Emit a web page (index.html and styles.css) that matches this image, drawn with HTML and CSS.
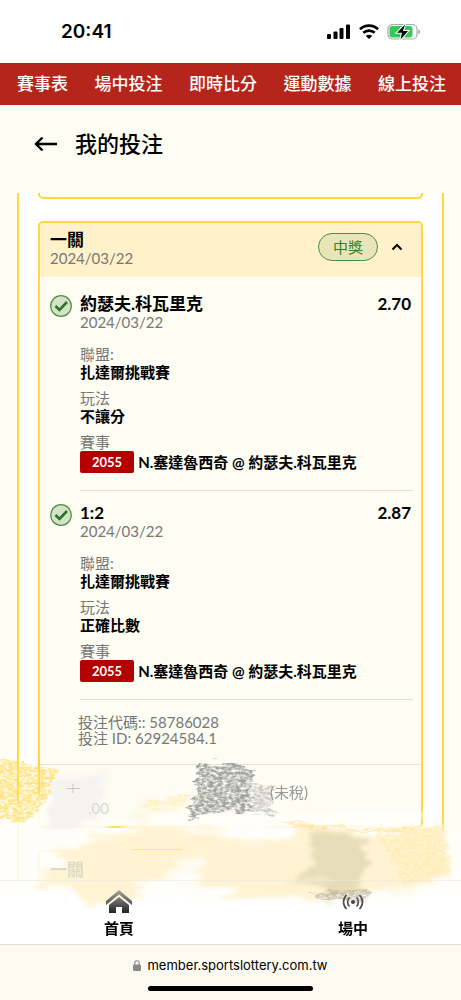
FILE: index.html
```html
<!DOCTYPE html>
<html lang="zh-Hant">
<head>
<meta charset="utf-8">
<meta name="viewport" content="width=device-width, initial-scale=1">
<title>我的投注</title>
<link rel="stylesheet" href="styles.css">
</head>
<body>
<div class="page">
  <header class="status">
    <span class="time">20:41</span>
    <div class="status-icons">
      <svg width="25" height="16" viewBox="0 0 25 16"><rect x="1" y="10" width="4" height="5" rx="1"/><rect x="7.500" y="7.500" width="4" height="7.500" rx="1"/><rect x="13.500" y="4" width="4" height="11" rx="1"/><rect x="20" y="0.500" width="4" height="14.500" rx="1"/></svg>
      <svg width="20" height="16" viewBox="0 0 20 16"><g fill="none" stroke="#000" stroke-width="2.700"><path d="M1 5.200C6 .4 14 .4 19 5.200"/><path d="M4.300 8.800c3.300-3 8.100-3 11.400 0"/></g><path d="M10 15 6.800 11.900c1.900-1.600 4.500-1.600 6.400 0z"/></svg>
      <svg width="34" height="18" viewBox="0 0 34 18"><rect x="1" y="1.500" width="29" height="14.500" rx="4.500" fill="#fff" stroke="#aaa" stroke-width="1.200"/><path d="M31.500 6.500c2 .7 2 4 0 4.700z" fill="#999"/><rect x="2.500" y="3" width="23" height="11.500" rx="3" fill="#34c759"/><path d="M18 1.500 10 9.700h5L13.500 16.500l7.500-8.500h-5z" stroke="#fff" stroke-width="2" paint-order="stroke"/></svg>
    </div>
  </header>
  <nav class="topnav">
    <a href="#">賽事表</a><a href="#">場中投注</a><a href="#">即時比分</a><a href="#">運動數據</a><a href="#">線上投注</a>
  </nav>
  <div class="heading">
    <button class="back" aria-label="返回"><svg width="24" height="18" viewBox="0 0 24 18"><path d="M23 9H2M8.500 2.500 2 9l6.500 6.500" fill="none" stroke="#000" stroke-width="2.400"/></svg></button>
    <h1>我的投注</h1>
  </div>

  <main class="list">
    <div class="card-end"></div>
    <section class="card">
      <div class="card-head">
        <div class="card-title"><h2>一關</h2><p class="date">2024/03/22</p></div>
        <span class="pill">中獎</span>
        <button class="toggle" aria-label="收合"><svg width="12" height="8" viewBox="0 0 12 8"><path d="m1.500 6.500 4.500-4.500 4.500 4.500" fill="none" stroke="#000" stroke-width="2"/></svg></button>
      </div>
      <article class="bet">
        <svg class="check" width="22" height="22" viewBox="0 0 22 22"><circle cx="11" cy="11" r="10.300" fill="#d5e2ca" stroke="#4f8d41" stroke-width="1.200"/><path d="m5.500 11 4 4 7.500-8" fill="none" stroke="#2c751f" stroke-width="2.600"/></svg>
        <div class="bet-body">
          <div class="bet-top"><h3>約瑟夫.科瓦里克</h3><strong>2.70</strong></div>
          <p class="date">2024/03/22</p>
          <dl>
            <div><dt>聯盟:</dt><dd>扎達爾挑戰賽</dd></div>
            <div><dt>玩法</dt><dd>不讓分</dd></div>
            <div><dt>賽事</dt><dd class="match"><span class="tag">2055</span>N.塞達魯西奇 @ 約瑟夫.科瓦里克</dd></div>
          </dl>
        </div>
      </article>
      <article class="bet">
        <svg class="check" width="22" height="22" viewBox="0 0 22 22"><circle cx="11" cy="11" r="10.300" fill="#d5e2ca" stroke="#4f8d41" stroke-width="1.200"/><path d="m5.500 11 4 4 7.500-8" fill="none" stroke="#2c751f" stroke-width="2.600"/></svg>
        <div class="bet-body">
          <div class="bet-top"><h3>1:2</h3><strong>2.87</strong></div>
          <p class="date">2024/03/22</p>
          <dl>
            <div><dt>聯盟:</dt><dd>扎達爾挑戰賽</dd></div>
            <div><dt>玩法</dt><dd>正確比數</dd></div>
            <div><dt>賽事</dt><dd class="match"><span class="tag">2055</span>N.塞達魯西奇 @ 約瑟夫.科瓦里克</dd></div>
          </dl>
        </div>
      </article>
      <div class="codes"><p>投注代碼:: 58786028</p><p>投注 ID: 62924584.1</p></div>
      <div class="totals"><span class="amount">.00</span><span class="pretax">(未稅)</span></div>
    </section>
    <section class="card next"><h2>一關</h2></section>
  </main>

  <nav class="tabs">
    <a href="#"><svg width="28" height="26" viewBox="0 0 28 26"><defs><linearGradient id="roof" x1="0" y1="0" x2="0" y2="1"><stop offset="0" stop-color="#aaa690"/><stop offset=".5" stop-color="#666"/><stop offset="1" stop-color="#222"/></linearGradient></defs><path fill="url(#roof)" d="M14 1 27 12v4L14 5.500 1 16v-4zM14 8l10 8v8h-7v-6h-6v6H4v-8z"/></svg><span>首頁</span></a>
    <a href="#"><svg width="24" height="26" viewBox="0 0 24 26"><circle cx="12" cy="13" r="2" fill="#444"/><path d="M8.500 8.500c-2.500 2.500-2.500 6.500 0 9M15.500 8.500c2.500 2.500 2.500 6.500 0 9M5.500 6c-4 4-4 10 0 14M18.500 6c4 4 4 10 0 14" fill="none" stroke="#4a4a46" stroke-width="1.600"/></svg><span>場中</span></a>
  </nav>
  <footer class="browser">
    <p><svg width="8" height="11" viewBox="0 0 8 11"><rect y="4.500" width="8" height="6.500" rx="1.200" fill="#888"/><path d="M1.800 5V3a2.200 2.200 0 0 1 4.400 0v2" fill="none" stroke="#888" stroke-width="1.100"/></svg>member.sportslottery.com.tw</p>
    <div class="indicator"></div>
  </footer>

  <svg class="scribble" viewBox="0 745 461 180" aria-hidden="true">
    <defs>
      <filter id="wash" x="-10%" y="-20%" width="120%" height="140%" color-interpolation-filters="sRGB">
        <feTurbulence type="fractalNoise" baseFrequency=".02 .16" numOctaves="3" seed="4" result="n"/>
        <feDisplacementMap in="SourceGraphic" in2="n" scale="26" xChannelSelector="R" yChannelSelector="G" result="d"/>
        <feGaussianBlur in="d" stdDeviation="2"/>
      </filter>
      <filter id="chalk" x="-10%" y="-20%" width="120%" height="140%" color-interpolation-filters="sRGB">
        <feTurbulence type="fractalNoise" baseFrequency=".04 .2" numOctaves="2" seed="8" result="n"/>
        <feDisplacementMap in="SourceGraphic" in2="n" scale="14" xChannelSelector="R" yChannelSelector="G" result="d"/>
        <feTurbulence type="fractalNoise" baseFrequency=".22 .4" numOctaves="3" seed="3"/>
        <feColorMatrix values="0 0 0 0 0  0 0 0 0 0  0 0 0 0 0  2.500 0 0 0 -.600" result="g"/>
        <feComposite in="d" in2="g" operator="in"/>
        <feGaussianBlur stdDeviation=".6"/>
      </filter>
    </defs>
    <g filter="url(#wash)">
      <path d="M-20 818 30 800 45 786 50 774 105 778 107 830 190 806 200 812 275 815 330 810 418 815 419 830 480 834 480 884 400 900 0 890-20 884z" fill="#fffefa" opacity=".9"/>
      <path d="M52 775h52l-2 46-54 8z" fill="#efefec" opacity=".7"/>
      <path d="M55 848 125 828 190 832 235 832 280 838 300 829 400 832 442 824 450 876 405 892 355 897 235 899 200 884 150 880 135 896 90 906 75 890 35 882 65 866z" fill="#fff2cd" opacity=".85"/>
      <path d="M137 806 192 796 180 812 137 820z" fill="#fff8df" opacity=".8"/>
      <path d="M160 874 202 856 198 888 145 894z" fill="#fff" opacity=".75"/>
      <path d="M195 822 278 816 268 840 235 844z" fill="#fffefb" opacity=".9"/>
    </g>
    <g filter="url(#wash)"><path d="M308 836 352 836 368 842 366 860 360 892 320 900 325 886 288 880 316 866z" fill="#ded4ae" opacity=".75"/></g>
    <g filter="url(#chalk)">
      <path d="M-15 756 58 767 48 797 26 822-15 817z" fill="#ffdf70" opacity=".85"/>
      <path d="M135 804 194 794 190 803 138 811z" fill="#ffe9a5" opacity=".5"/>
      <path d="M276 817 330 827 420 827 400 832 300 829z" fill="#ffdf85" opacity=".65"/>
      <path d="M375 832 445 824 452 875 405 886 385 850z" fill="#ffe7a0" opacity=".5"/>
      <path d="M198 762 225 763 257 772 249 785 250 812 245 814 222 810 188 819 191 806 197 796 196 780z" fill="#858582" opacity=".75"/>
      <path d="M248 784 276 785 270 806 277 817 248 813z" fill="#858582" opacity=".4"/>
      <path d="M310 892 370 890 366 902 320 901z" fill="#aaa58d" opacity=".6"/>
    </g>
    <path d="M0 880.500h461" stroke="#e9e9e4" opacity=".6"/>
    <path d="M132 849.500h50" stroke="#ffdf72" opacity=".8"/>
    <path d="M73 784v9M67 788.500h13" stroke="#aaa9a2" opacity=".6"/>
  </svg>
</div>
</body>
</html>
```
FILE: styles.css
```css
* { box-sizing: border-box; }
body, h1, h2, h3, p, dl, dd { margin: 0; }
body {
  background: #fdfdf4;
  color: #000;
  font: 15px/18px Lato, "Noto Sans CJK TC", sans-serif;
}
a { color: inherit; text-decoration: none; }
button { border: 0; padding: 0; background: none; display: flex; }
svg { display: block; flex: none; }

.page { position: relative; display: flex; flex-direction: column; height: 100vh; overflow: hidden; }

.status {
  display: flex; justify-content: space-between; align-items: center;
  height: 63px; padding: 0 40px 0 61px; background: #fff; flex: none;
}
.time { font: 600 19px/24px Inter, sans-serif; }
.status-icons { display: flex; align-items: center; gap: 8px; }

.topnav {
  display: flex; justify-content: space-between; align-items: center; flex: none;
  height: 42px; padding: 0 15px 0 17px; background: #b5251b; color: #fff;
  font-size: 17px; font-weight: 500; white-space: nowrap;
}

.heading { display: flex; align-items: center; gap: 17px; height: 88px; padding: 0 34px 10px; flex: none; }
.heading h1 { font-size: 22px; line-height: 28px; font-weight: 500; }

.list {
  flex: 1; min-height: 0; overflow: hidden; margin: 0 17px; padding: 0 19px;
  border: solid #ffd83b; border-width: 0 2px; background: #fff;
}
.card-end { height: 6px; border: 2px solid #ffd83b; border-top: 0; border-radius: 0 0 5px 5px; margin-bottom: 22px; background: #fdfdf4; }
.card { border: 2px solid #ffd83b; border-radius: 5px; background: #fdfdf4; margin-bottom: 22px; overflow: hidden; }
.card-head { display: flex; align-items: center; padding: 8px 18px 10px 10px; background: #fff1c9; }
.card-title { flex: 1; }
.card h2 { font-size: 17px; line-height: 18px; font-weight: 700; }
.date, dt, .codes { color: #777; }
.pill {
  padding: 4px 14px; margin: -4px 13px 0 0; border: 1px solid #4f8d41; border-radius: 14px;
  background: #e8e6b8; color: #397d2c;
}
.toggle { margin-top: -4px; }

.bet { display: flex; gap: 8px; padding: 0 8px 0 10px; }
.check { margin-top: 13px; }
.bet-body { flex: 1; padding: 13px 0 17px; border-bottom: 1px solid #dfdfd8; }
.card-head + .bet .bet-body { padding-top: 18px; }
.card-head + .bet .check { margin-top: 18px; }
.bet-top { display: flex; justify-content: space-between; font-size: 17px; padding-right: 2px; }
.bet-top h3 { font-size: 17px; font-weight: 700; }
dl { display: grid; gap: 8px; margin-top: 14px; }
dd { font-weight: 700; }
.match { display: flex; align-items: center; gap: 4px; white-space: nowrap; }
.tag { padding: 2px 12px; border-radius: 2px; background: #b40000; color: #fff; font-size: 13px; }

.codes { padding: 14px 38px 18px; line-height: 16px; border-bottom: 1px solid #e3e3dc; }
.totals { display: grid; grid-template-columns: 1fr 2fr; height: 61px; padding: 18px 48px; color: #999; }
.amount { position: relative; z-index: 1; padding-top: 16px; color: #d8d8d4; }
.pretax { position: relative; z-index: 1; padding-left: 87px; }
.card.next h2 { position: relative; z-index: 1; padding: 9px 10px 60px; color: #dedac6; }

.tabs { display: grid; grid-template-columns: 51% 51%; height: 63px; padding: 8px 0 0 2px; background: #fff; overflow: hidden; flex: none; }
.tabs a { position: relative; z-index: 1; display: flex; flex-direction: column; align-items: center; gap: 4px; font-weight: 700; }

.browser {
  display: flex; flex-direction: column; align-items: center; justify-content: space-between; flex: none;
  height: 56px; padding: 11px 0 9px; border-top: 1px solid #dfdfd8; background: #fcfaf0;
}
.browser p { display: flex; align-items: center; gap: 6px; font: 13px/18px Inter, sans-serif; }
.indicator { width: 165px; height: 5px; border-radius: 3px; background: #000; }

.scribble { position: absolute; left: 0; bottom: 75px; width: 100%; pointer-events: none; }
```
